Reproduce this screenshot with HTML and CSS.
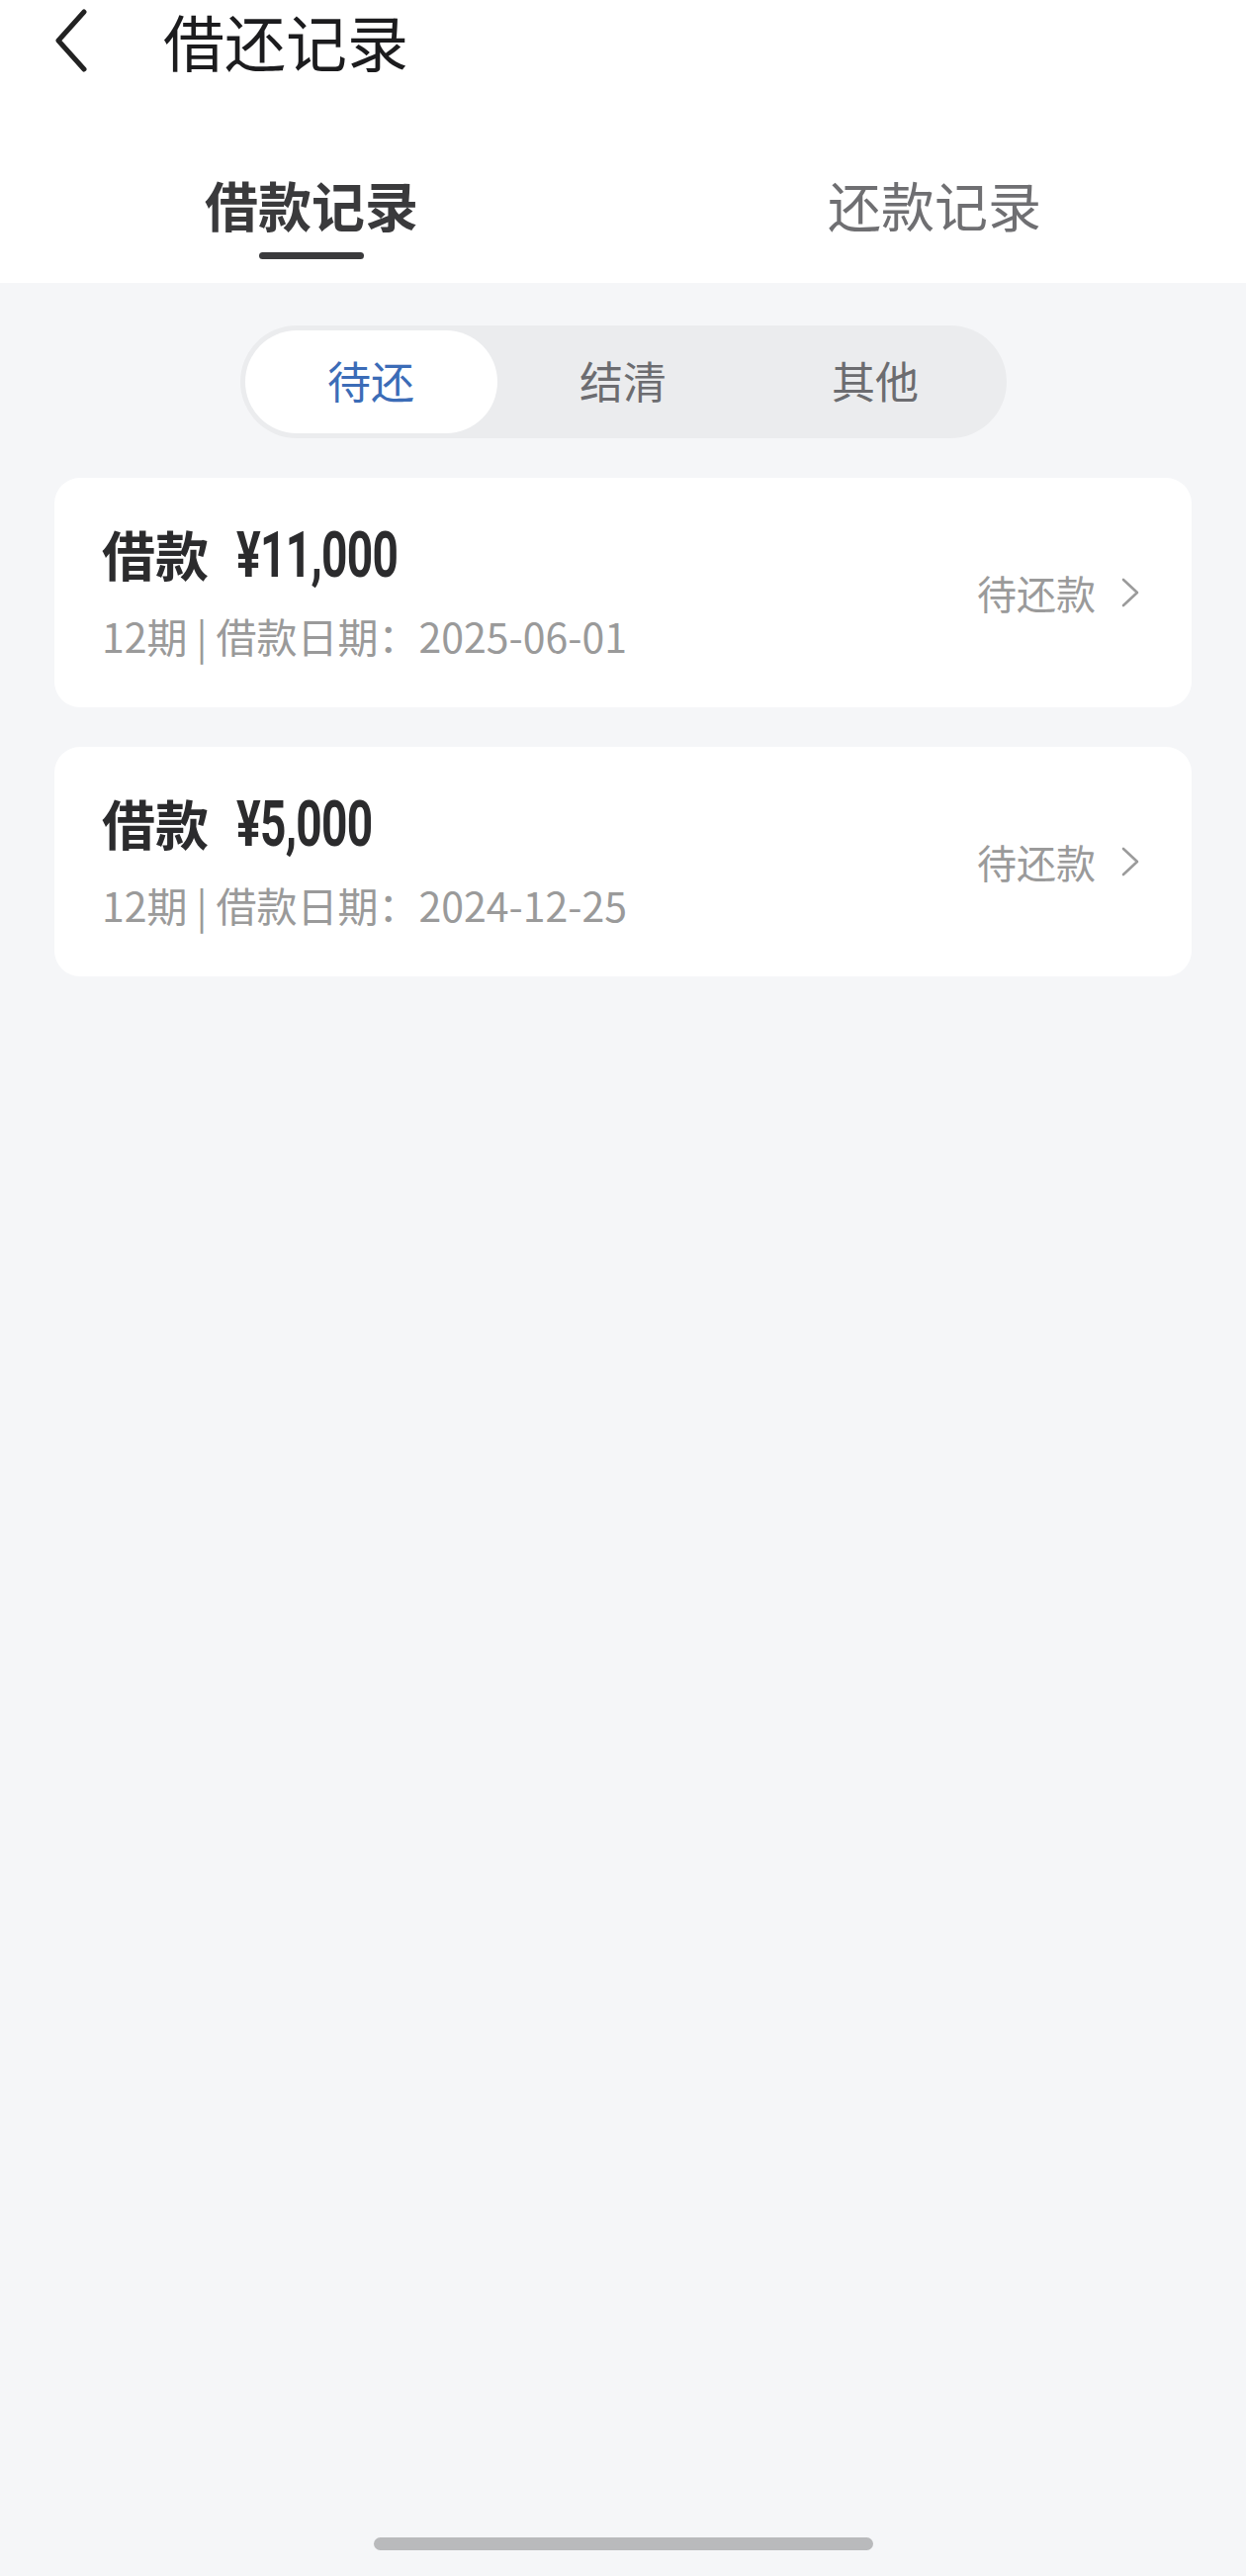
FILE: index.html
```html
<!DOCTYPE html>
<html lang="zh-CN">
<head>
    <meta charset="UTF-8">
    <meta name="viewport" content="width=device-width, initial-scale=1.0">
    <title>借还记录</title>
    <link rel="stylesheet" href="styles.css">
</head>
<body>

<!-- Cabecera blanca: barra de navegación y pestañas -->
<div class="header">
    <div class="nav-bar">
        <svg class="back-icon" viewBox="0 0 36 64" width="36" height="64">
            <path d="M31 3 L5 32 L31 61" fill="none" stroke="#222" stroke-width="5" stroke-linecap="round" stroke-linejoin="round"/>
        </svg>
        <span class="nav-title">借还记录</span>
    </div>

    <div class="tabs">
        <div class="tab active">
            <span>借款记录</span>
            <div class="tab-line"></div>
        </div>
        <div class="tab">
            <span>还款记录</span>
            <div class="tab-line"></div>
        </div>
    </div>
</div>

<!-- Filtro de estado -->
<div class="segment">
    <div class="segment-item selected">待还</div>
    <div class="segment-item">结清</div>
    <div class="segment-item">其他</div>
</div>

<!-- Lista de préstamos -->
<div class="list">
    <div class="card">
        <div class="card-info">
            <div class="card-title">借款<span class="amount">¥11,000</span></div>
            <div class="card-sub">12期<span class="sep">|</span>借款日期：2025-06-01</div>
        </div>
        <div class="card-status">
            <span>待还款</span>
            <svg viewBox="0 0 20 30" width="20" height="30">
                <path d="M3 2 L17 15 L3 28" fill="none" stroke="#9b9b9b" stroke-width="2.6" stroke-linecap="round" stroke-linejoin="round"/>
            </svg>
        </div>
    </div>

    <div class="card">
        <div class="card-info">
            <div class="card-title">借款<span class="amount">¥5,000</span></div>
            <div class="card-sub">12期<span class="sep">|</span>借款日期：2024-12-25</div>
        </div>
        <div class="card-status">
            <span>待还款</span>
            <svg viewBox="0 0 20 30" width="20" height="30">
                <path d="M3 2 L17 15 L3 28" fill="none" stroke="#9b9b9b" stroke-width="2.6" stroke-linecap="round" stroke-linejoin="round"/>
            </svg>
        </div>
    </div>
</div>

<div class="home-bar"></div>

</body>
</html>
```

FILE: styles.css
```css
body {
    font-family: "Noto Sans CJK SC", "Noto Sans", sans-serif;
    background: #f5f6f8;
    margin: 0;
    padding: 0;
    min-height: 2604px;
    display: flex;
    flex-direction: column;
}

/* Cabecera */
.header {
    background: #fff;
    height: 286px;
    box-sizing: border-box;
}

.nav-bar {
    height: 88px;
    display: flex;
    align-items: center;
    padding-left: 54px;
}

.back-icon {
    display: block;
    margin-top: -6px;
}

.nav-title {
    font-size: 62px;
    line-height: 88px;
    color: #1c1c1e;
    margin-left: 75px;
    margin-top: -6px;
}

.tabs {
    display: flex;
    padding-top: 84px;
}

.tab {
    flex: 1;
    display: flex;
    flex-direction: column;
    align-items: center;
    font-size: 54px;
    line-height: 70px;
    color: #6f6f72;
}

.tab.active {
    color: #3a3a3c;
    font-weight: bold;
}

.tab-line {
    width: 106px;
    height: 7px;
    margin-top: 13px;
    border-radius: 4px;
}

.tab.active .tab-line {
    background: #3a3a3c;
}

/* Filtro segmentado */
.segment {
    align-self: center;
    display: flex;
    margin-top: 43px;
    padding: 5px;
    background: #ebecee;
    border-radius: 57px;
}

.segment-item {
    width: 255px;
    height: 104px;
    line-height: 100px;
    text-align: center;
    font-size: 44px;
    color: #6c6c70;
    border-radius: 52px;
}

.segment-item.selected {
    background: #fff;
    color: #3b6cb7;
}

/* Tarjetas */
.list {
    display: flex;
    flex-direction: column;
    gap: 40px;
    margin: 40px 55px 0;
}

.card {
    background: #fff;
    border-radius: 26px;
    padding: 44px 52px 48px 48px;
    display: flex;
    align-items: center;
    justify-content: space-between;
}

.card-title {
    font-size: 54px;
    line-height: 66px;
    font-weight: bold;
    color: #2b2b2d;
}

/* Cifra estrecha como la tipografía del sistema */
.amount {
    display: inline-block;
    font-family: Roboto, "Liberation Sans", sans-serif;
    font-size: 64px;
    letter-spacing: -1px;
    margin-left: 28px;
    transform: scaleX(0.72);
    transform-origin: left center;
}

.card-sub {
    margin-top: 22px;
    font-size: 41px;
    line-height: 50px;
    color: #9a9a9a;
}

.sep {
    margin: 0 9px;
}

.card-status {
    display: flex;
    align-items: center;
    gap: 25px;
    font-size: 40px;
    color: #9a9a9a;
    margin-top: 4px;
}

.card-status svg {
    display: block;
}

/* Indicador inferior */
.home-bar {
    align-self: center;
    width: 505px;
    height: 13px;
    margin-top: auto;
    margin-bottom: 26px;
    background: #b9babc;
    border-radius: 7px;
}
```
